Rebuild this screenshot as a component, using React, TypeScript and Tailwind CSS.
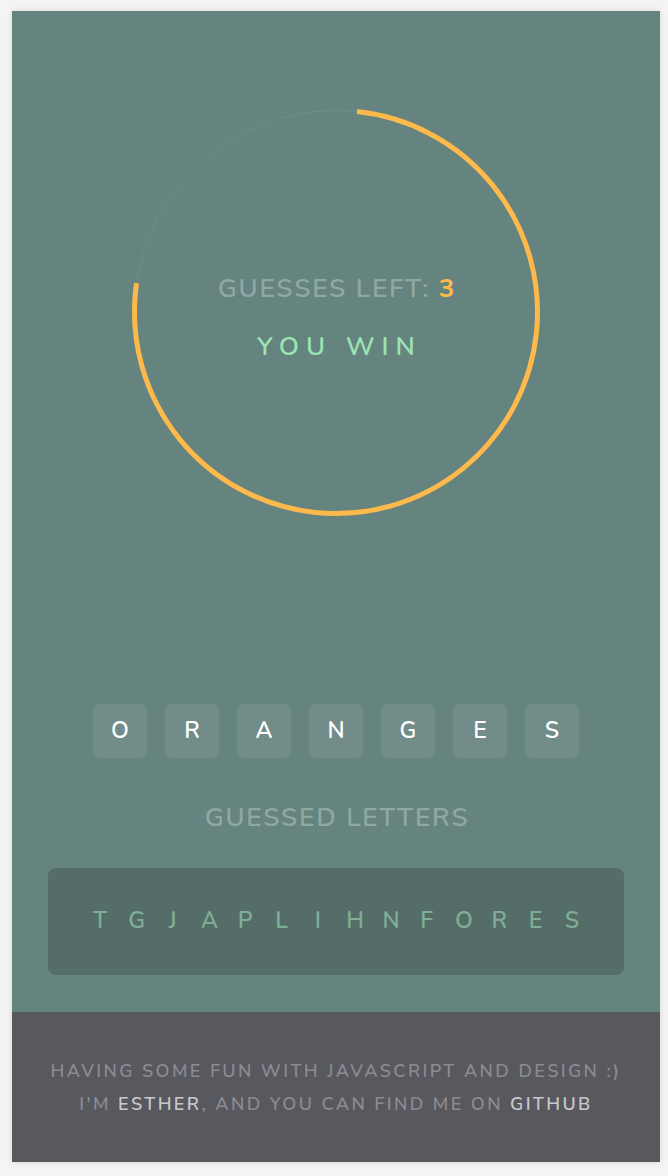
import React from 'react';

const word = ['O', 'R', 'A', 'N', 'G', 'E', 'S'];
const guessed = ['T', 'G', 'J', 'A', 'P', 'L', 'I', 'H', 'N', 'F', 'O', 'R', 'E', 'S'];

// progress ring, r = 201.5
const radius = 201.5;
const circumference = 2 * Math.PI * radius;
const arc = circumference * 0.756;

export default function App() {
  return (
    <div className="min-h-screen bg-[#f4f4f4] px-[12px] pt-[11px] pb-[14px] font-['Nunito','Open_Sans',sans-serif]">
      <div className="w-[648px] shadow-[0_0_6px_rgba(0,0,0,0.12)]">
        <section className="flex flex-col items-center bg-[#65837f] px-[36px] pt-[95px] pb-[37px]">
          <div className="relative h-[412px] w-[412px]">
            <svg className="absolute inset-0" width="412" height="412" viewBox="0 0 412 412">
              <circle cx="206" cy="206" r={radius} fill="none" stroke="#6f8c89" strokeWidth="1" />
              <circle
                cx="206"
                cy="206"
                r={radius}
                fill="none"
                stroke="#fdb94b"
                strokeWidth="5"
                strokeDasharray={`${arc} ${circumference}`}
                transform="rotate(-84 206 206)"
              />
            </svg>
            <div className="relative flex flex-col items-center pt-[166px]">
              <p className="pl-[2px] text-[26px] font-semibold leading-[34px] tracking-[1.8px] text-[#8fa8a4]">
                GUESSES LEFT: <span className="font-bold text-[#fdb94b]">3</span>
              </p>
              <p className="mt-[25px] pl-[7px] text-[26px] font-semibold leading-[32px] tracking-[7px] text-[#9be3b1]">YOU WIN</p>
            </div>
          </div>

          <div className="mt-[186px] flex gap-[18px]">
            {word.map((l, i) => (
              <div
                key={i}
                className="flex h-[54px] w-[54px] items-center justify-center rounded-[6px] bg-[#718c89] text-[23px] font-semibold text-white"
              >
                {l}
              </div>
            ))}
          </div>

          <h2 className="mt-[43px] pl-[2px] text-[26px] font-semibold leading-[34px] tracking-[1.8px] text-[#8fa8a4]">GUESSED LETTERS</h2>

          <div className="mt-[33px] flex h-[107px] w-full items-center justify-center gap-[20.3px] rounded-[8px] bg-[#546d69] text-[23px] font-semibold text-[#80ae95]">
            {guessed.map((l, i) => (
              <span key={i} className="w-[16px] text-center">{l}</span>
            ))}
          </div>
        </section>

        <footer className="flex h-[150px] flex-col items-center justify-center gap-[9px] bg-[#58585f] text-[18px] font-semibold leading-[24px] tracking-[2.4px] text-[#8b8b91]">
          <p>HAVING SOME FUN WITH JAVASCRIPT AND DESIGN :)</p>
          <p>
            I'M <span className="text-[#c9c9cd]">ESTHER</span>, AND YOU CAN FIND ME ON{' '}
            <span className="text-[#c9c9cd]">GITHUB</span>
          </p>
        </footer>
      </div>
    </div>
  );
}
